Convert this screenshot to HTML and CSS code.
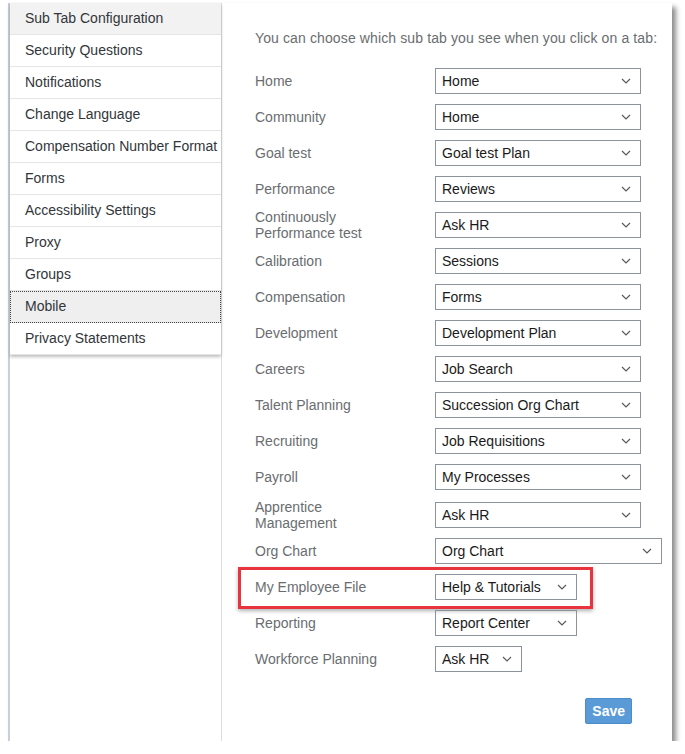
FILE: index.html
```html
<!DOCTYPE html>
<html lang="en">
<head>
    <meta charset="UTF-8">
    <meta name="viewport" content="width=device-width, initial-scale=1.0">
    <title>Sub Tab Configuration</title>
    <link rel="stylesheet" href="styles.css">
</head>
<body>
    <div class="window">
        <nav class="sidebar">
            <ul class="menu">
                <li class="menu-item current">Sub Tab Configuration</li>
                <li class="menu-item">Security Questions</li>
                <li class="menu-item">Notifications</li>
                <li class="menu-item">Change Language</li>
                <li class="menu-item">Compensation Number Format</li>
                <li class="menu-item">Forms</li>
                <li class="menu-item">Accessibility Settings</li>
                <li class="menu-item">Proxy</li>
                <li class="menu-item">Groups</li>
                <li class="menu-item focused">Mobile</li>
                <li class="menu-item">Privacy Statements</li>
            </ul>
        </nav>

        <main class="content">
            <p class="intro">You can choose which sub tab you see when you click on a tab:</p>

            <div class="form">
                <div class="row">
                    <span class="label">Home</span>
                    <div class="dropdown"><span>Home</span><svg viewBox="0 0 10 6"><polyline points="1,1 5,5 9,1"/></svg></div>
                </div>
                <div class="row">
                    <span class="label">Community</span>
                    <div class="dropdown"><span>Home</span><svg viewBox="0 0 10 6"><polyline points="1,1 5,5 9,1"/></svg></div>
                </div>
                <div class="row">
                    <span class="label">Goal test</span>
                    <div class="dropdown"><span>Goal test Plan</span><svg viewBox="0 0 10 6"><polyline points="1,1 5,5 9,1"/></svg></div>
                </div>
                <div class="row">
                    <span class="label">Performance</span>
                    <div class="dropdown"><span>Reviews</span><svg viewBox="0 0 10 6"><polyline points="1,1 5,5 9,1"/></svg></div>
                </div>
                <div class="row">
                    <span class="label">Continuously<br>Performance test</span>
                    <div class="dropdown"><span>Ask HR</span><svg viewBox="0 0 10 6"><polyline points="1,1 5,5 9,1"/></svg></div>
                </div>
                <div class="row">
                    <span class="label">Calibration</span>
                    <div class="dropdown"><span>Sessions</span><svg viewBox="0 0 10 6"><polyline points="1,1 5,5 9,1"/></svg></div>
                </div>
                <div class="row">
                    <span class="label">Compensation</span>
                    <div class="dropdown"><span>Forms</span><svg viewBox="0 0 10 6"><polyline points="1,1 5,5 9,1"/></svg></div>
                </div>
                <div class="row">
                    <span class="label">Development</span>
                    <div class="dropdown"><span>Development Plan</span><svg viewBox="0 0 10 6"><polyline points="1,1 5,5 9,1"/></svg></div>
                </div>
                <div class="row">
                    <span class="label">Careers</span>
                    <div class="dropdown"><span>Job Search</span><svg viewBox="0 0 10 6"><polyline points="1,1 5,5 9,1"/></svg></div>
                </div>
                <div class="row">
                    <span class="label">Talent Planning</span>
                    <div class="dropdown"><span>Succession Org Chart</span><svg viewBox="0 0 10 6"><polyline points="1,1 5,5 9,1"/></svg></div>
                </div>
                <div class="row">
                    <span class="label">Recruiting</span>
                    <div class="dropdown"><span>Job Requisitions</span><svg viewBox="0 0 10 6"><polyline points="1,1 5,5 9,1"/></svg></div>
                </div>
                <div class="row">
                    <span class="label">Payroll</span>
                    <div class="dropdown"><span>My Processes</span><svg viewBox="0 0 10 6"><polyline points="1,1 5,5 9,1"/></svg></div>
                </div>
                <div class="row tall">
                    <span class="label">Apprentice<br>Management</span>
                    <div class="dropdown"><span>Ask HR</span><svg viewBox="0 0 10 6"><polyline points="1,1 5,5 9,1"/></svg></div>
                </div>
                <div class="row">
                    <span class="label">Org Chart</span>
                    <div class="dropdown wide"><span>Org Chart</span><svg viewBox="0 0 10 6"><polyline points="1,1 5,5 9,1"/></svg></div>
                </div>
                <div class="row highlighted">
                    <span class="label">My Employee File</span>
                    <div class="dropdown medium"><span>Help &amp; Tutorials</span><svg viewBox="0 0 10 6"><polyline points="1,1 5,5 9,1"/></svg></div>
                </div>
                <div class="row">
                    <span class="label">Reporting</span>
                    <div class="dropdown medium"><span>Report Center</span><svg viewBox="0 0 10 6"><polyline points="1,1 5,5 9,1"/></svg></div>
                </div>
                <div class="row">
                    <span class="label">Workforce Planning</span>
                    <div class="dropdown narrow"><span>Ask HR</span><svg viewBox="0 0 10 6"><polyline points="1,1 5,5 9,1"/></svg></div>
                </div>

                <div class="actions">
                    <button class="save">Save</button>
                </div>
            </div>
        </main>
    </div>
</body>
</html>
```

FILE: styles.css
```css
body {
    margin: 0;
    background: #ffffff;
    font-family: "Liberation Sans", Arial, sans-serif;
    font-size: 14px;
}

.window {
    display: flex;
    height: 738px;
    margin: 3px 13px 0 8px;
    background: #ffffff;
    border-left: 2px solid #c8cfd8;
    box-shadow: 4px 4px 5px rgba(0, 0, 0, 0.45);
}

/* left menu */
.sidebar {
    width: 211px;
    flex-shrink: 0;
    border-right: 1px solid #dedede;
}

.menu {
    list-style: none;
    margin: 0;
    padding: 0;
    box-shadow: 0 2px 3px rgba(0, 0, 0, 0.25);
}

.menu-item {
    height: 31px;
    line-height: 31px;
    padding-left: 15px;
    color: #32363a;
    white-space: nowrap;
    overflow: hidden;
    border-bottom: 1px solid #e5e5e5;
}

.menu-item.current {
    background: #f2f2f2;
}

.menu-item.focused {
    background: #efefef;
    outline: 1px dotted #444;
    outline-offset: -1px;
}

/* right side */
.content {
    flex: 1;
    padding: 25px 0 0 33px;
}

.intro {
    margin: 0 0 15px;
    line-height: 20px;
    letter-spacing: 0.12px;
    color: #6a6d70;
}

.form {
    width: 377px;
}

.row {
    position: relative;
    display: flex;
    align-items: center;
    height: 36px;
}

.row.tall {
    height: 38px;
    padding-top: 2px;
    box-sizing: border-box;
}

.label {
    width: 180px;
    flex-shrink: 0;
    line-height: 16px;
    color: #6a6d70;
}

.dropdown {
    display: flex;
    flex-shrink: 0;
    align-items: center;
    justify-content: space-between;
    box-sizing: border-box;
    width: 206px;
    height: 26px;
    padding: 0 9px 0 6px;
    border: 1px solid #8d939a;
    color: #1a1a1a;
    white-space: nowrap;
}

.dropdown svg {
    width: 10px;
    height: 6px;
    fill: none;
    stroke: #555a60;
    stroke-width: 1.2;
}

.dropdown.wide {
    width: 227px;
}

.dropdown.medium {
    width: 142px;
}

.dropdown.narrow {
    width: 87px;
}

/* red annotation box */
.highlighted::after {
    content: "";
    position: absolute;
    left: -17px;
    top: -2px;
    width: 349px;
    height: 36px;
    border: 3px solid #e8353d;
    box-shadow: 0 2px 4px rgba(0, 0, 0, 0.3);
}

.actions {
    display: flex;
    justify-content: flex-end;
    margin-top: 21px;
}

.save {
    height: 26px;
    padding: 0 6px;
    background: #5a9ad6;
    border: 1px solid #4c8cca;
    border-radius: 2px;
    color: #ffffff;
    font-family: "Liberation Sans", Arial, sans-serif;
    font-size: 14px;
    font-weight: bold;
}
```
